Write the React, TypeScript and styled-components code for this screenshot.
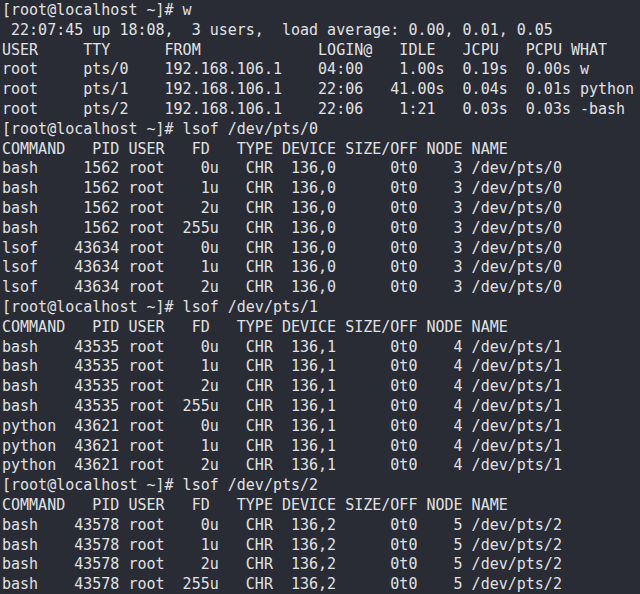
import React from "react";
import styled, { createGlobalStyle } from "styled-components";

const Global = createGlobalStyle`
  html, body {
    margin: 0;
    padding: 0;
    background: #292c35;
  }
`;

const Screen = styled.div`
  width: 640px;
  height: 594px;
  box-sizing: border-box;
  padding: 1px 0 0 2px;
  background: #292c35;
  color: #e0e1e3;
  font-family: "DejaVu Sans Mono", "Liberation Mono", monospace;
  font-size: 15px;
  line-height: 19.8px;
  overflow: hidden;
  display: flex;
  flex-direction: column;
`;

const Line = styled.div`
  white-space: pre;
  height: 19.8px;
  flex: none;
`;

const lines: string[] = [
  "[root@localhost ~]# w",
  " 22:07:45 up 18:08,  3 users,  load average: 0.00, 0.01, 0.05",
  "USER     TTY      FROM             LOGIN@   IDLE   JCPU   PCPU WHAT",
  "root     pts/0    192.168.106.1    04:00    1.00s  0.19s  0.00s w",
  "root     pts/1    192.168.106.1    22:06   41.00s  0.04s  0.01s python",
  "root     pts/2    192.168.106.1    22:06    1:21   0.03s  0.03s -bash",
  "[root@localhost ~]# lsof /dev/pts/0",
  "COMMAND   PID USER   FD   TYPE DEVICE SIZE/OFF NODE NAME",
  "bash     1562 root    0u   CHR  136,0      0t0    3 /dev/pts/0",
  "bash     1562 root    1u   CHR  136,0      0t0    3 /dev/pts/0",
  "bash     1562 root    2u   CHR  136,0      0t0    3 /dev/pts/0",
  "bash     1562 root  255u   CHR  136,0      0t0    3 /dev/pts/0",
  "lsof    43634 root    0u   CHR  136,0      0t0    3 /dev/pts/0",
  "lsof    43634 root    1u   CHR  136,0      0t0    3 /dev/pts/0",
  "lsof    43634 root    2u   CHR  136,0      0t0    3 /dev/pts/0",
  "[root@localhost ~]# lsof /dev/pts/1",
  "COMMAND   PID USER   FD   TYPE DEVICE SIZE/OFF NODE NAME",
  "bash    43535 root    0u   CHR  136,1      0t0    4 /dev/pts/1",
  "bash    43535 root    1u   CHR  136,1      0t0    4 /dev/pts/1",
  "bash    43535 root    2u   CHR  136,1      0t0    4 /dev/pts/1",
  "bash    43535 root  255u   CHR  136,1      0t0    4 /dev/pts/1",
  "python  43621 root    0u   CHR  136,1      0t0    4 /dev/pts/1",
  "python  43621 root    1u   CHR  136,1      0t0    4 /dev/pts/1",
  "python  43621 root    2u   CHR  136,1      0t0    4 /dev/pts/1",
  "[root@localhost ~]# lsof /dev/pts/2",
  "COMMAND   PID USER   FD   TYPE DEVICE SIZE/OFF NODE NAME",
  "bash    43578 root    0u   CHR  136,2      0t0    5 /dev/pts/2",
  "bash    43578 root    1u   CHR  136,2      0t0    5 /dev/pts/2",
  "bash    43578 root    2u   CHR  136,2      0t0    5 /dev/pts/2",
  "bash    43578 root  255u   CHR  136,2      0t0    5 /dev/pts/2",
];

export default function App() {
  return (
    <>
      <Global />
      <Screen>
        {lines.map((l, i) => (
          <Line key={i}>{l}</Line>
        ))}
      </Screen>
    </>
  );
}
